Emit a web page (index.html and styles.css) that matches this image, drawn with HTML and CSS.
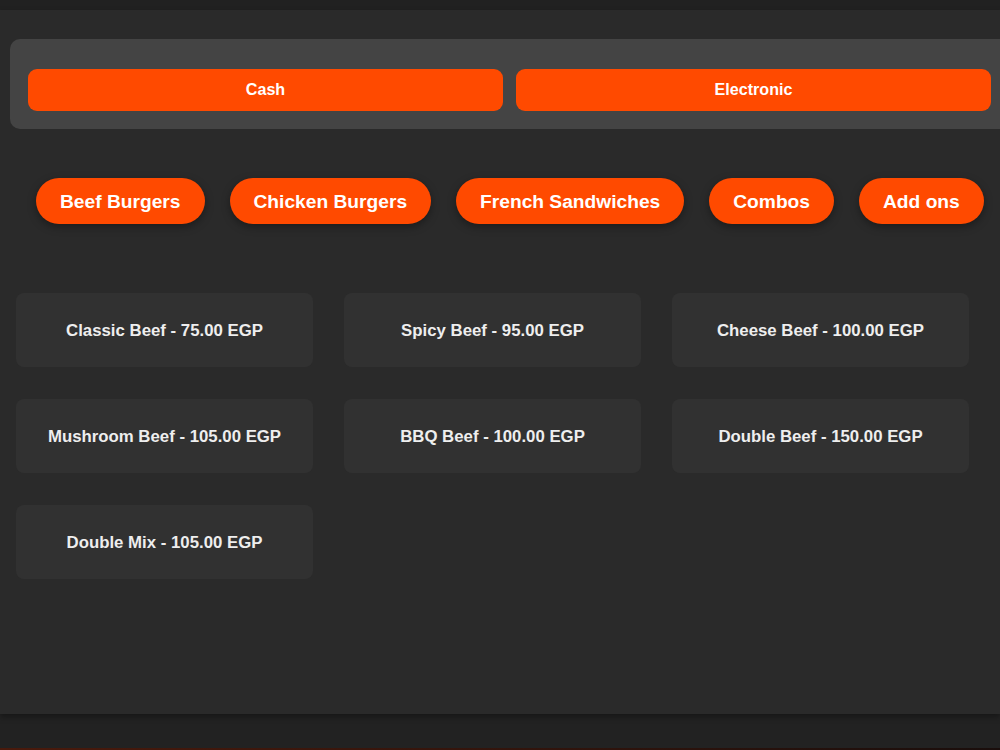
FILE: index.html
```html
<!DOCTYPE html>
<html>
<head>
<meta charset="utf-8">
<link rel="stylesheet" href="styles.css">
</head>
<body>
<div class="topstrip"></div>
<main class="main">
  <section class="payment">
    <button class="pay-btn">Cash</button>
    <button class="pay-btn">Electronic</button>
  </section>
  <nav class="cats">
    <button class="cat">Beef Burgers</button>
    <button class="cat">Chicken Burgers</button>
    <button class="cat">French Sandwiches</button>
    <button class="cat">Combos</button>
    <button class="cat">Add ons</button>
  </nav>
  <section class="items">
    <div class="item">Classic Beef - 75.00 EGP</div>
    <div class="item">Spicy Beef - 95.00 EGP</div>
    <div class="item">Cheese Beef - 100.00 EGP</div>
    <div class="item">Mushroom Beef - 105.00 EGP</div>
    <div class="item">BBQ Beef - 100.00 EGP</div>
    <div class="item">Double Beef - 150.00 EGP</div>
    <div class="item">Double Mix - 105.00 EGP</div>
  </section>
</main>
<div class="bottom"></div>
<div class="redline"></div>
</body>
</html>
```
FILE: styles.css
```css
html, body {
  margin: 0;
  padding: 0;
  background: #222222;
  font-family: "Liberation Sans", Arial, Helvetica, sans-serif;
  overflow: hidden;
  width: 1000px;
  height: 750px;
}
.topstrip {
  height: 10px;
  background: #212121;
}
.main {
  height: 704px;
  box-sizing: border-box;
  background: #2a2a2a;
  padding-top: 29px;
  box-shadow: 0 3px 6px rgba(0,0,0,0.35);
  position: relative;
  overflow: hidden;
}
.payment {
  margin-left: 10px;
  width: 999px;
  box-sizing: border-box;
  height: 90px;
  padding: 30px 18px 18px;
  background: #444444;
  border-radius: 10px;
  display: flex;
  gap: 13px;
}
.pay-btn {
  flex: 1;
  height: 42px;
  padding: 0 0 2px;
  border: none;
  border-radius: 9px;
  background: #ff4a00;
  color: #ffffff;
  font-family: inherit;
  font-weight: bold;
  font-size: 16.1px;
}
.cats {
  display: flex;
  gap: 25px;
  margin-top: 49px;
  padding-left: 36px;
}
.cat {
  height: 46px;
  padding: 1px 24px 0;
  border: none;
  border-radius: 23px;
  background: #ff4a00;
  color: #ffffff;
  font-family: inherit;
  font-weight: bold;
  font-size: 19.2px;
  box-shadow: 0 3px 8px rgba(0,0,0,0.35);
  white-space: nowrap;
}
.items {
  display: grid;
  grid-template-columns: repeat(3, 297px);
  grid-auto-rows: 74px;
  column-gap: 31px;
  row-gap: 32px;
  margin-top: 69px;
  padding-left: 16px;
}
.item {
  background: #313131;
  border-radius: 8px;
  display: flex;
  align-items: center;
  justify-content: center;
  padding-top: 1px;
  box-sizing: border-box;
  color: #eeeeee;
  font-weight: bold;
  font-size: 16.8px;
}
.bottom {
  height: 34px;
  background: #222222;
}
.redline {
  height: 2px;
  background: linear-gradient(to right, #4a1a0c, #2a120c 70%, #1a0e0c);
}
```
